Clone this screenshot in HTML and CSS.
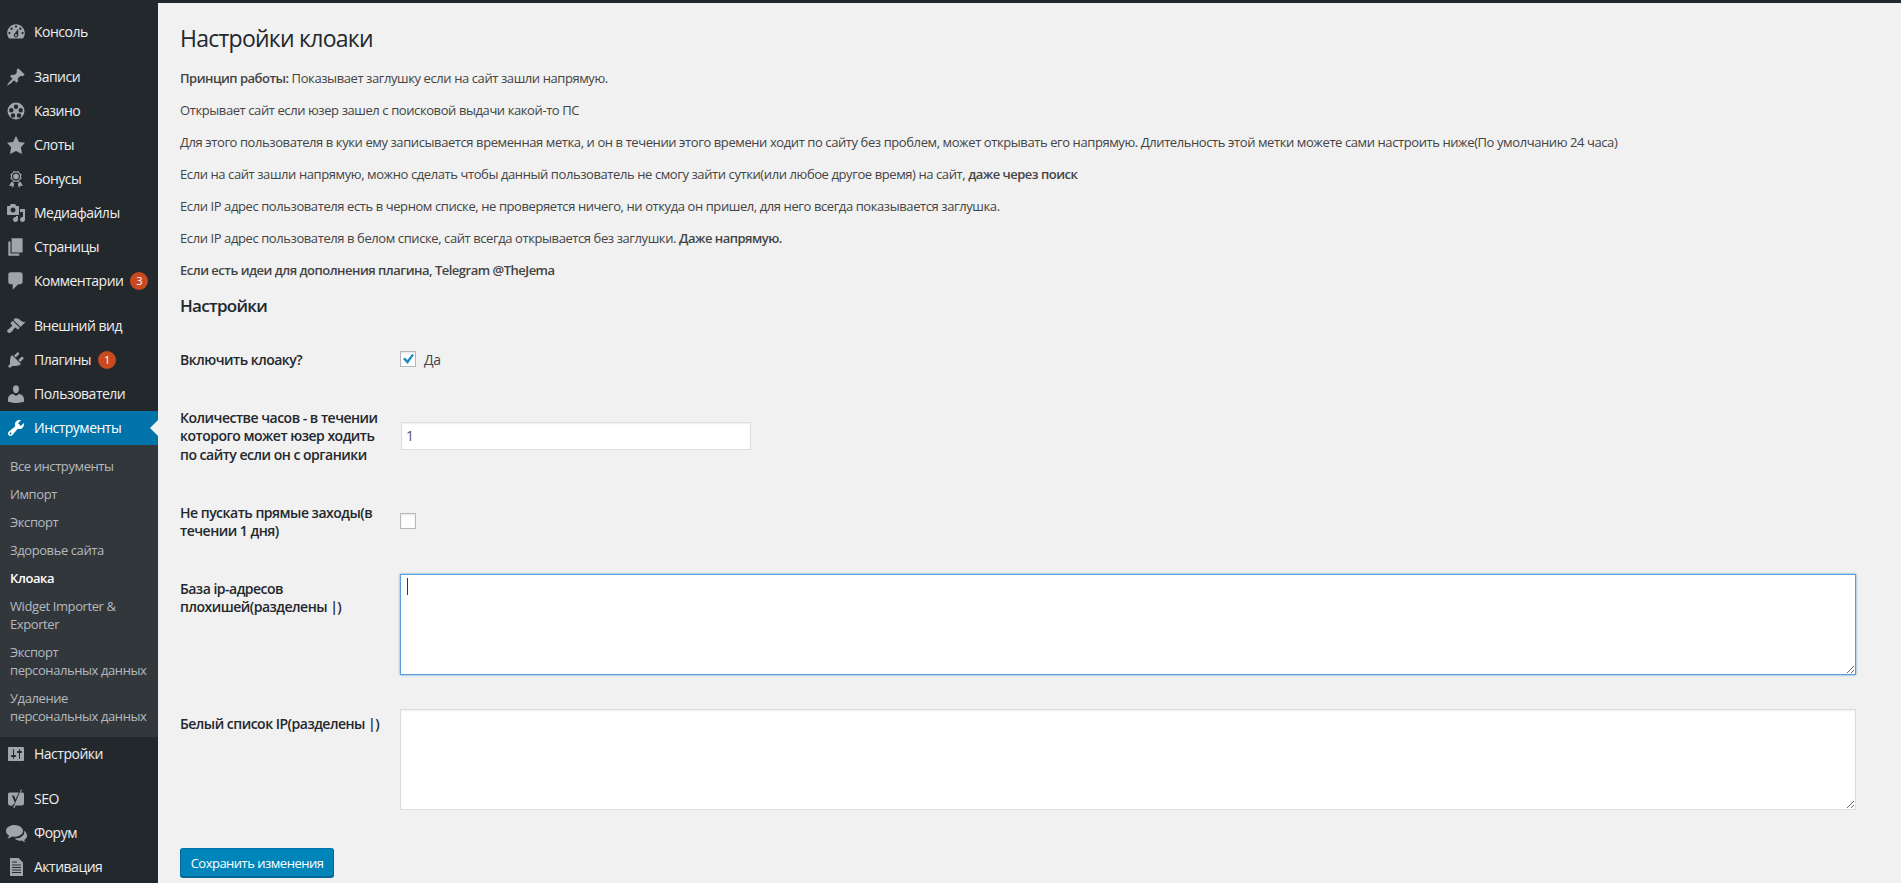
FILE: index.html
```html
<!DOCTYPE html>
<html lang="ru">
<head>
<meta charset="utf-8">
<title>Настройки клоаки</title>
<link rel="stylesheet" href="styles.css">
</head>
<body>
<div class="topbar"></div>
<div class="shell">
  <nav class="sidebar">
    <ul class="menu">
      <li class="item"><svg class="icon icon-lg" viewBox="0 0 20 20"><path d="M3.76 16h12.48c1.1-1.37 1.76-3.11 1.76-5 0-4.42-3.58-8-8-8s-8 3.58-8 8c0 1.89.66 3.63 1.76 5zM10 4c.55 0 1 .45 1 1s-.45 1-1 1-1-.45-1-1 .45-1 1-1zM6 6c.55 0 1 .45 1 1s-.45 1-1 1-1-.45-1-1 .45-1 1-1zm8 0c.55 0 1 .45 1 1s-.45 1-1 1-1-.45-1-1 .45-1 1-1zm-5.37 5.55L12 7v6c0 1.1-.9 2-2 2s-2-.9-2-2c0-.57.24-1.08.63-1.45zM4 10c.55 0 1 .45 1 1s-.45 1-1 1-1-.45-1-1 .45-1 1-1zm12 0c.55 0 1 .45 1 1s-.45 1-1 1-1-.45-1-1 .45-1 1-1zm-5 3c0-.55-.45-1-1-1s-1 .45-1 1 .45 1 1 1 1-.45 1-1z"/></svg>Консоль</li>
      <li class="sep"></li>
      <li class="item"><svg class="icon" viewBox="0 0 20 20"><path d="M10.44 3.02l1.82-1.82 6.36 6.35-1.83 1.82c-1.05-.68-2.48-.57-3.41.36l-.75.75c-.92.93-1.04 2.35-.35 3.41l-1.83 1.82-2.41-2.41-2.8 2.79c-.42.42-3.38 2.71-3.8 2.29s1.86-3.39 2.28-3.81l2.79-2.79L4.1 9.36l1.83-1.82c1.05.69 2.48.57 3.4-.36l.75-.75c.93-.92 1.05-2.35.36-3.41z"/></svg>Записи</li>
      <li class="item"><svg class="icon" viewBox="0 0 20 20"><path fill-rule="evenodd" d="M10 1.500a8.500 8.500 0 1 0 0 17 8.500 8.500 0 0 0 0-17zM10 3.600a2.200 2.200 0 1 1 0 4.400 2.200 2.200 0 0 1 0-4.400zM5.300 7a2.200 2.200 0 1 1 0 4.400 2.200 2.200 0 0 1 0-4.400zM14.700 7a2.200 2.200 0 1 1 0 4.400 2.200 2.200 0 0 1 0-4.400zM7 12.300a2.200 2.200 0 1 1 0 4.400 2.200 2.200 0 0 1 0-4.400zM13 12.300a2.200 2.200 0 1 1 0 4.400 2.200 2.200 0 0 1 0-4.400z"/></svg>Казино</li>
      <li class="item"><svg class="icon" viewBox="0 0 20 20"><path d="M10 1l3 6 6 .75-4.12 4.62L16 19l-6-3-6 3 1.13-6.63L1 7.75 7 7z"/></svg>Слоты</li>
      <li class="item"><svg class="icon" viewBox="0 0 20 20"><path fill-rule="evenodd" d="M4.460 5.160L5 7.460l-.54 2.290 2.010 1.240L7.700 13l2.300-.54 2.300.54 1.230-2.010 2.010-1.240L15 7.460l.54-2.300-2-1.240-1.240-2.010-2.300.55-2.290-.54-1.250 2zM10 3.500a4 4 0 1 1 0 8 4 4 0 0 1 0-8zM10 4.700a2.800 2.800 0 1 0 0 5.600 2.800 2.800 0 0 0 0-5.600z"/><path d="M5.600 12.600l1.600 1 1 1.300-1.300 4-1.300-2.200-2.600.3zM14.400 12.600l-1.600 1-1 1.300 1.300 4 1.300-2.200 2.600.3z"/></svg>Бонусы</li>
      <li class="item"><svg class="icon" viewBox="0 0 20 20"><path d="M13 11V4c0-.55-.45-1-1-1h-1.670L9 1H5L3.670 3H2c-.55 0-1 .45-1 1v7c0 .55.45 1 1 1h10c.55 0 1-.45 1-1zM7 4.500c1.380 0 2.500 1.120 2.500 2.500S8.380 9.500 7 9.500 4.500 8.380 4.500 7 5.620 4.500 7 4.500zM14 6h5v10.500c0 1.380-1.120 2.500-2.500 2.500S14 17.880 14 16.500s1.120-2.500 2.500-2.500c.17 0 .34.02.5.05V9h-3V6zm-4 8.050V13h2v3.500c0 1.380-1.120 2.500-2.500 2.500S7 17.880 7 16.500 8.120 14 9.500 14c.17 0 .34.02.5.05z"/></svg>Медиафайлы</li>
      <li class="item"><svg class="icon icon-lg" viewBox="0 0 20 20"><path d="M6 15V2h10v13H6zm-1 1h8v2H3V5h2v11z"/></svg>Страницы</li>
      <li class="item"><svg class="icon icon-lg" viewBox="0 0 20 20"><path d="M5 2h9c1.100 0 2 .9 2 2v7c0 1.100-.9 2-2 2h-2l-5 5v-5H5c-1.100 0-2-.9-2-2V4c0-1.100.9-2 2-2z"/></svg>Комментарии<span class="badge">3</span></li>
      <li class="sep"></li>
      <li class="item"><svg class="icon" viewBox="0 0 20 20"><path d="M14.480 11.060L7.410 3.990l1.500-1.500c.5-.56 2.300-.47 3.510.32 1.210.8 1.430 1.280 2.910 2.100 1.180.64 2.450 1.260 4.450.85zm-.71.71L6.700 4.700 4.930 6.470c-.39.39-.39 1.020 0 1.410l1.060 1.060c.39.39.39 1.030 0 1.420-.6.6-1.430 1.110-2.210 1.690-.35.26-.7.53-1.010.84C1.430 13.230.4 14.980 1.720 16.300c1.300 1.300 3.070.27 4.380-1.050.31-.31.58-.66.84-1.010.58-.78 1.090-1.610 1.690-2.210.39-.39 1.030-.39 1.420 0l1.060 1.060c.39.39 1.020.39 1.410 0z"/></svg>Внешний вид</li>
      <li class="item"><svg class="icon" viewBox="0 0 20 20"><path d="M13.110 4.360L9.870 7.600 8 5.730l3.240-3.240c.35-.34 1.050-.2 1.560.32.52.51.66 1.210.31 1.550zm-8 1.770l.91-1.120 9.010 9.010-1.190.84c-.71.71-2.630 1.160-3.820 1.160H6.140L4.900 17.260c-.59.59-1.540.59-2.120 0-.59-.58-.59-1.530 0-2.120l1.240-1.240v-3.880c0-1.130.4-3.190 1.090-3.890zm7.260 3.970l3.240-3.240c.34-.35 1.040-.21 1.550.31.52.51.66 1.210.31 1.550l-3.240 3.250z"/></svg>Плагины<span class="badge">1</span></li>
      <li class="item"><svg class="icon icon-lg" viewBox="0 0 20 20"><path d="M10 9.250c-2.270 0-2.730-3.440-2.730-3.440C7 4.020 7.820 2 9.970 2c2.160 0 2.980 2.020 2.710 3.810 0 0-.41 3.440-2.680 3.440zm0 2.570L12.720 10c2.390 0 4.520 2.330 4.520 4.530v2.490s-3.650 1.130-7.240 1.130c-3.650 0-7.240-1.130-7.240-1.130v-2.490c0-2.250 1.940-4.480 4.470-4.480z"/></svg>Пользователи</li>
      <li class="item active"><svg class="icon" viewBox="0 0 20 20"><path d="M16.680 9.770c-1.340 1.340-3.300 1.670-4.950.99l-5.410 6.520c-.99.99-2.590.99-3.580 0s-.99-2.590 0-3.570l6.520-5.420c-.68-1.650-.35-3.610.99-4.950 1.280-1.280 3.120-1.620 4.720-1.060l-2.890 2.890 2.820 2.820 2.860-2.870c.53 1.580.18 3.390-1.080 4.670zM3.810 16.210c.4.39 1.040.39 1.430 0 .4-.4.4-1.040 0-1.430-.39-.4-1.030-.4-1.430 0-.39.39-.39 1.030 0 1.430z"/></svg>Инструменты</li>
      <li class="sub">
        <ul class="submenu">
          <li>Все инструменты</li>
          <li>Импорт</li>
          <li>Экспорт</li>
          <li>Здоровье сайта</li>
          <li class="current">Клоака</li>
          <li>Widget Importer &amp; Exporter</li>
          <li>Экспорт персональных данных</li>
          <li>Удаление персональных данных</li>
        </ul>
      </li>
      <li class="item"><svg class="icon" viewBox="0 0 20 20"><path d="M18 16V4c0-.55-.45-1-1-1H3c-.55 0-1 .45-1 1v12c0 .55.45 1 1 1h14c.55 0 1-.45 1-1zM8 11h1c.55 0 1 .45 1 1s-.45 1-1 1H8v1.500c0 .28-.22.5-.5.5s-.5-.22-.5-.5V13H6c-.55 0-1-.45-1-1s.45-1 1-1h1V5.500c0-.28.22-.5.5-.5s.5.22.5.5V11zm5-2h-1c-.55 0-1-.45-1-1s.45-1 1-1h1V5.500c0-.28.22-.5.5-.5s.5.22.5.5V7h1c.55 0 1 .45 1 1s-.45 1-1 1h-1v5.500c0 .28-.22.5-.5.5s-.5-.22-.5-.5V9z"/></svg>Настройки</li>
      <li class="sep"></li>
      <li class="item"><svg class="icon" viewBox="0 0 20 20"><path d="M3.500 3.500H13L11 7.200l-1.400 3.300-1.600-4H5.900l2.900 6.900-.5 1.100c-.3.6-.8.9-1.600.9v1.300H5A3 3 0 0 1 2 13.500V5a1.500 1.500 0 0 1 1.500-1.500z"/><path d="M14.300 3.500H16.500A1.500 1.500 0 0 1 18 5V14a2.500 2.500 0 0 1-2.500 2.500H9.500l-1 2.500-1.300-.3L15 .5l1.300.4z"/></svg>SEO</li>
      <li class="item"><svg class="icon icon-wide" viewBox="0 0 24 20"><path d="M9.500 2C5 2 1 4.500 1 8c0 2 1.300 3.600 3.200 4.700-.3 1-1 2-1.900 2.800 1.900-.2 3.500-1 4.700-2 .8.200 1.600.3 2.500.3 4.700 0 8.500-2.600 8.500-5.800S14.200 2 9.500 2z"/><path d="M19 7.600c.2.500.3 1 .3 1.500 0 3.600-3.900 6.500-8.800 6.500h-.7c1.100 1.300 3 2.100 5.200 2.100.6 0 1.200-.1 1.800-.2 1 .9 2.300 1.400 3.900 1.600-.7-.6-1.300-1.400-1.500-2.200 1.600-.9 2.800-2.300 2.800-3.900 0-2.300-1.300-4.300-3-5.400z"/></svg>Форум</li>
      <li class="item"><svg class="icon" viewBox="0 0 20 20"><path fill-rule="evenodd" d="M4 1h8.500L17 5.500V19H4zM6 4.500v1h5v-1zM6 7.500v1h9v-1zM6 10v1h9v-1zM6 12.500v1h9v-1zM6 15v1h9v-1z"/></svg>Активация</li>
    </ul>
  </nav>
  <main class="content">
    <h1 class="title">Настройки клоаки</h1>
    <p class="note"><b>Принцип работы:</b> Показывает заглушку если на сайт зашли напрямую.</p>
    <p class="note">Открывает сайт если юзер зашел с поисковой выдачи какой-то ПС</p>
    <p class="note">Для этого пользователя в куки ему записывается временная метка, и он в течении этого времени ходит по сайту без проблем, может открывать его напрямую. Длительность этой метки можете сами настроить ниже(По умолчанию 24 часа)</p>
    <p class="note">Если на сайт зашли напрямую, можно сделать чтобы данный пользователь не смогу зайти сутки(или любое другое время) на сайт, <b>даже через поиск</b></p>
    <p class="note">Если IP адрес пользователя есть в черном списке, не проверяется ничего, ни откуда он пришел, для него всегда показывается заглушка.</p>
    <p class="note">Если IP адрес пользователя в белом списке, сайт всегда открывается без заглушки. <b>Даже напрямую.</b></p>
    <p class="note"><b>Если есть идеи для дополнения плагина, Telegram @TheJema</b></p>
    <h2 class="section">Настройки</h2>
    <form>
      <table class="form-table">
        <tr>
          <th>Включить клоаку?</th>
          <td><label class="check"><input type="checkbox" class="box" checked><span>Да</span></label></td>
        </tr>
        <tr>
          <th>Количестве часов - в течении которого может юзер ходить по сайту если он с органики</th>
          <td><input type="text" class="field" value="1"></td>
        </tr>
        <tr>
          <th>Не пускать прямые заходы(в течении 1 дня)</th>
          <td><input type="checkbox" class="box"></td>
        </tr>
        <tr>
          <th>База ip-адресов плохишей(разделены |)</th>
          <td><div class="area-wrap"><textarea class="area focused"></textarea><span class="caret"></span></div></td>
        </tr>
        <tr>
          <th>Белый список IP(разделены |)</th>
          <td><div class="area-wrap"><textarea class="area"></textarea></div></td>
        </tr>
      </table>
      <button type="button" class="save">Сохранить изменения</button>
    </form>
  </main>
</div>
</body>
</html>
```
FILE: styles.css
```css
* { box-sizing: border-box; }
html, body { margin: 0; height: 100%; overflow: hidden; }
body {
  background: #f1f1f1;
  color: #444;
  font-family: "Open Sans", "Noto Sans", sans-serif;
  font-size: 13px;
  letter-spacing: -0.41px;
  display: flex;
  flex-direction: column;
}
.topbar { height: 3px; background: #23282d; flex: none; }
.shell { flex: 1; display: flex; min-height: 0; }

.sidebar { width: 158px; flex: none; background: #23282d; padding-top: 12px; overflow: hidden; }
.menu, .submenu { list-style: none; margin: 0; padding: 0; }
.item {
  position: relative;
  display: flex;
  align-items: center;
  height: 34px;
  padding: 0 0 1px 34px;
  font-size: 14px;
  letter-spacing: -0.5px;
  color: #eee;
}
.icon {
  position: absolute;
  left: 6px;
  top: 7px;
  width: 20px;
  height: 20px;
  fill: #a0a5aa;
}
.icon-lg { left: 5px; top: 6px; width: 22px; height: 22px; }
.icon-wide { left: 5px; width: 24px; }
.sep { height: 11px; }
.active { background: #0073aa; color: #fff; }
.active .icon { fill: #fff; }
.active::after {
  content: "";
  position: absolute;
  right: 0;
  top: 9px;
  border: 8px solid transparent;
  border-right-color: #f1f1f1;
  border-left-width: 0;
}
.badge {
  display: inline-flex;
  align-items: center;
  justify-content: center;
  width: 18px;
  height: 18px;
  margin-left: 7px;
  border-radius: 50%;
  background: #ca4a1f;
  color: #fff;
  font-size: 11px;
  letter-spacing: 0;
}
.submenu { background: #32373c; padding: 7px 0 7px; }
.submenu li {
  padding: 5px 10px 5px 10px;
  font-size: 13px;
  line-height: 18px;
  color: #b4b9be;
}
.submenu .current { color: #fff; font-weight: 600; }

.content { flex: 1; min-width: 0; padding: 20px 45px 0 22px; }
.title {
  margin: 0;
  font-size: 23px;
  font-weight: 400;
  line-height: 30px;
  color: #23282d;
  letter-spacing: -0.75px;
}
.note { margin: 13px 0; line-height: 19px; }
.title + .note { margin-top: 16px; }
.note b { font-weight: 600; letter-spacing: -0.5px; }
.section {
  margin: 0;
  padding-top: 1px;
  font-size: 17px;
  font-weight: 600;
  line-height: 24px;
  letter-spacing: -0.7px;
  color: #23282d;
}
.form-table { width: 100%; border-collapse: collapse; margin-top: 12px; }
.form-table th {
  width: 220px;
  padding: 21px 20px 19px 0;
  text-align: left;
  vertical-align: top;
  font-size: 14px;
  font-weight: 600;
  line-height: 18.2px;
  letter-spacing: -0.5px;
  color: #23282d;
}
.form-table td { padding: 15px 0 15px 0; vertical-align: middle; }
.check { display: flex; align-items: center; gap: 8px; font-size: 14px; }
.box {
  appearance: none;
  display: block;
  position: relative;
  width: 16px;
  height: 16px;
  margin: 0;
  background: #fff;
  border: 1px solid #b4b9be;
  box-shadow: inset 0 1px 2px rgba(0,0,0,.1);
}
.box:checked::before {
  content: "";
  position: absolute;
  left: 2px;
  top: 2px;
  width: 11px;
  height: 10px;
  background: #1e8cbe;
  clip-path: polygon(0 48%, 18% 34%, 40% 60%, 82% 0, 100% 10%, 42% 100%);
}
.field {
  display: block;
  width: 350px;
  height: 28px;
  margin-left: 1px;
  padding: 3px 5px 3px 4px;
  border: 1px solid #ddd;
  background: #fff;
  font: inherit;
  font-size: 14px;
  color: #50555a;
  box-shadow: inset 0 1px 2px rgba(0,0,0,.07);
}
.area-wrap { position: relative; margin-bottom: 4px; }
.area {
  display: block;
  width: 100%;
  height: 101px;
  margin: 0;
  border: 1px solid #ddd;
  background: #fff;
  box-shadow: inset 0 1px 2px rgba(0,0,0,.07);
  outline: none;
}
.focused { border-color: #5b9dd9; box-shadow: 0 0 2px rgba(30,140,190,.8); }
.caret {
  position: absolute;
  left: 7px;
  top: 4px;
  width: 1px;
  height: 17px;
  background: #32373c;
}
.save {
  display: block;
  width: 154px;
  height: 29px;
  margin-top: 19px;
  padding: 0;
  border: 1px solid;
  border-color: #0073aa #006799 #006799;
  border-radius: 3px;
  background: #0085ba;
  box-shadow: 0 1px 0 #006799;
  color: #fff;
  font: inherit;
  letter-spacing: -0.5px;
}
```
